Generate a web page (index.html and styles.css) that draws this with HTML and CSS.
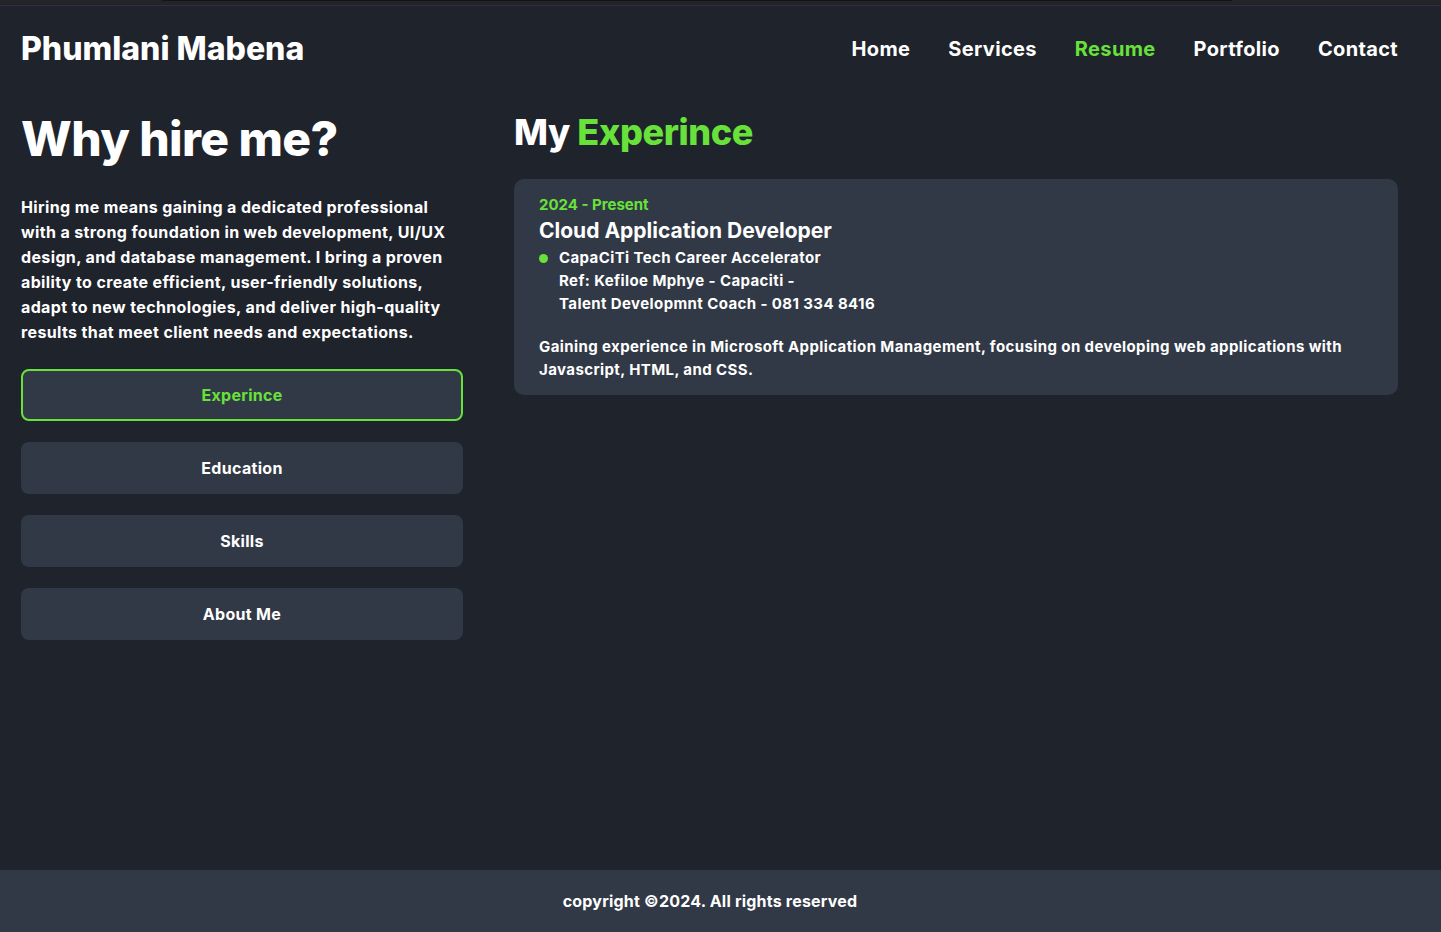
FILE: index.html
```html
<!DOCTYPE html>
<html lang="en">
<head>
<meta charset="utf-8">
<title>Phumlani Mabena - Resume</title>
<link rel="stylesheet" href="styles.css">
</head>
<body>
<div class="topstrip"><span class="topline"></span></div>
<header class="header">
  <a class="logo" href="#">Phumlani Mabena</a>
  <nav class="nav">
    <a href="#">Home</a>
    <a href="#">Services</a>
    <a href="#" class="active">Resume</a>
    <a href="#">Portfolio</a>
    <a href="#">Contact</a>
  </nav>
</header>
<main class="resume">
  <section class="left">
    <h1 class="why">Why hire me?</h1>
    <p class="intro">Hiring me means gaining a dedicated professional with a strong foundation in web development, UI/UX design, and database management. I bring a proven ability to create efficient, user-friendly solutions, adapt to new technologies, and deliver high-quality results that meet client needs and expectations.</p>
    <div class="tabs">
      <button class="tab active">Experince</button>
      <button class="tab">Education</button>
      <button class="tab">Skills</button>
      <button class="tab">About Me</button>
    </div>
  </section>
  <section class="right">
    <h2 class="heading">My <span class="green">Experince</span></h2>
    <div class="card">
      <p class="date">2024 - Present</p>
      <h3 class="role">Cloud Application Developer</h3>
      <div class="company">
        <span class="dot"></span>
        <p class="company-text">CapaCiTi Tech Career Accelerator<br>Ref: Kefiloe Mphye - Capaciti -<br>Talent Developmnt Coach - 081 334 8416</p>
      </div>
      <p class="desc">Gaining experience in Microsoft Application Management, focusing on developing web applications with Javascript, HTML, and CSS.</p>
    </div>
  </section>
</main>
<footer class="footer">
  <p>copyright &copy;2024. All rights reserved</p>
</footer>
</body>
</html>
```
FILE: styles.css
```css
* {
  box-sizing: border-box;
  margin: 0;
  padding: 0;
}

html, body {
  height: 100%;
}

body {
  background: #1f232c;
  color: #ffffff;
  font-family: "Inter", "Noto Sans", sans-serif;
  font-weight: 700;
  display: flex;
  flex-direction: column;
  min-height: 932px;
}

.topstrip {
  height: 6px;
  background: #242428;
  border-bottom: 1px solid #2b303a;
  display: flex;
}

.topline {
  display: block;
  margin-left: 162px;
  width: 1070px;
  height: 1px;
  background: #151518;
}

.header {
  display: flex;
  justify-content: space-between;
  align-items: center;
  padding: 2px 43px 0 21px;
  height: 82px;
}

.logo {
  color: #ffffff;
  text-decoration: none;
  font-size: 32px;
  font-weight: 800;
  letter-spacing: 0;
}

.nav {
  display: flex;
  gap: 38px;
  padding-top: 2px;
}

.nav a {
  color: #ffffff;
  text-decoration: none;
  font-size: 20px;
  font-weight: 700;
  letter-spacing: 0.35px;
}

.nav a.active {
  color: #68e23a;
}

.resume {
  flex: 1;
  display: grid;
  grid-template-columns: 1fr 2fr;
  gap: 51px;
  padding: 19px 43px 0 21px;
  align-items: start;
}

.why {
  font-size: 48px;
  font-weight: 800;
  line-height: 1.2;
  letter-spacing: -0.6px;
  margin-top: 3px;
}

.intro {
  margin-top: 27px;
  font-size: 16px;
  font-weight: 700;
  line-height: 25px;
  letter-spacing: 0.37px;
}

.tabs {
  display: flex;
  flex-direction: column;
  gap: 21px;
  margin-top: 24px;
}

.tab {
  height: 52px;
  background: #323946;
  border: 2px solid transparent;
  border-radius: 8px;
  color: #ffffff;
  font-family: inherit;
  font-size: 16px;
  font-weight: 700;
  letter-spacing: 0.3px;
  cursor: pointer;
}

.tab.active {
  border-color: #68e23a;
  color: #68e23a;
}

.heading {
  font-size: 36px;
  font-weight: 800;
  line-height: 1.2;
  letter-spacing: -0.4px;
  margin-top: 4px;
}

.green {
  color: #68e23a;
}

.card {
  margin-top: 25px;
  background: #323946;
  border-radius: 10px;
  padding: 15px 25px 14px;
}

.date {
  color: #68e23a;
  font-size: 15px;
  line-height: 22px;
}

.role {
  font-size: 21px;
  font-weight: 700;
  line-height: 30px;
  letter-spacing: 0;
}

.company {
  display: flex;
  align-items: flex-start;
  gap: 11px;
}

.dot {
  width: 9px;
  height: 9px;
  border-radius: 50%;
  background: #68e23a;
  margin-top: 8px;
  flex-shrink: 0;
}

.company-text,
.desc {
  font-size: 15px;
  line-height: 23px;
  letter-spacing: 0.4px;
}

.desc {
  margin-top: 20px;
}

.footer {
  background: #323946;
  height: 62px;
  display: flex;
  align-items: center;
  justify-content: center;
  padding-right: 21px;
  font-size: 16px;
  letter-spacing: 0.2px;
}
```
